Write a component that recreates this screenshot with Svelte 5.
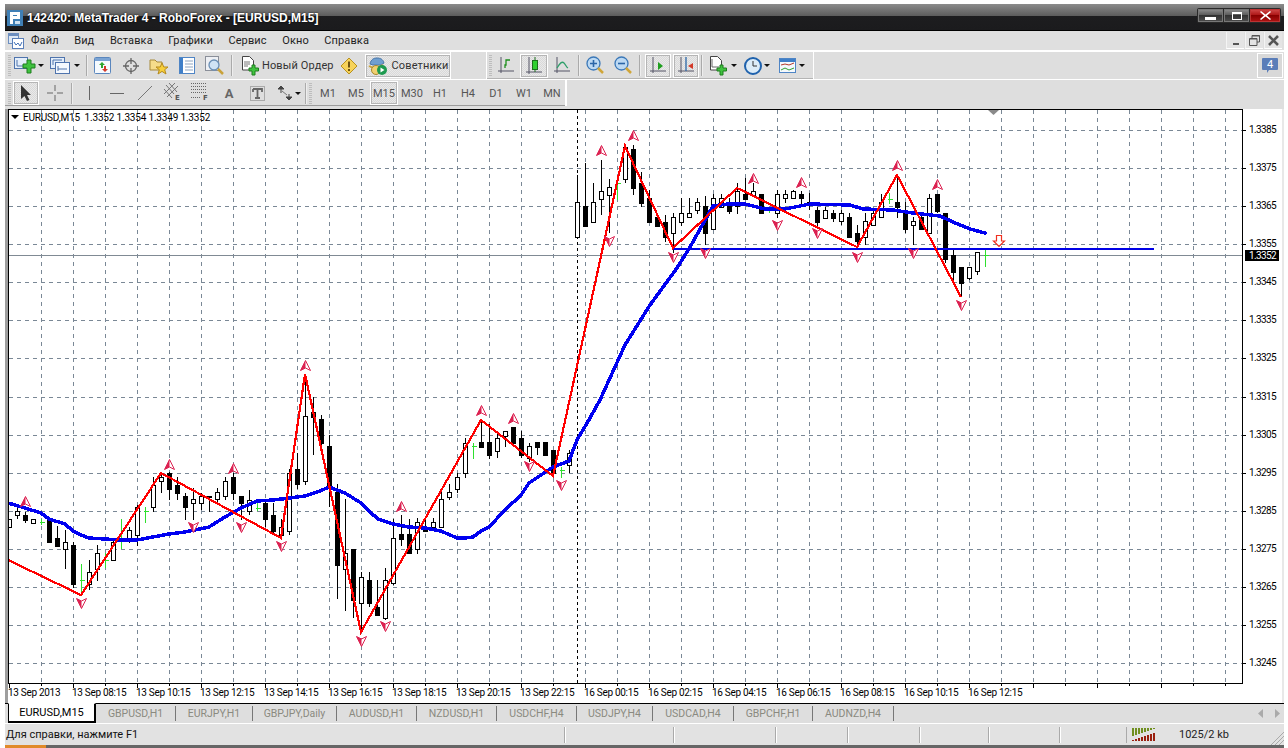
<script>
  const W = 'w', B = 'b', G = 'g';
  // [high, bodyTop, bodyBottom, low, kind] in chart pixels; one candle every 8px from x=9
  const candles = [
    [519,519,527,527,W],[508,511,515,519,W],[512,515,520,523,B],[519,519,523,523,W],[519,522,522,525,G],[519,519,542,542,B],[526,538,546,546,B],[530,542,549,569,W],[542,545,584,588,B],[564,580,580,592,G],[560,572,584,590,W],[545,553,569,581,W],[553,560,560,568,G],[538,542,560,560,W],[519,538,538,549,G],[527,530,539,543,W],[505,507,535,546,W],[507,511,511,523,G],[477,485,507,512,W],[473,477,481,493,W],
    [472,473,489,500,B],[477,485,493,500,B],[493,496,507,520,B],[488,499,503,520,W],[493,496,503,510,W],[496,496,497,512,W],[488,492,499,503,W],[477,481,496,500,W],[473,477,493,500,B],[496,496,503,520,B],[490,500,511,515,W],[500,508,508,511,G],[499,503,519,527,B],[503,515,531,535,B],[519,527,535,539,W],[469,473,531,535,W],[453,469,484,489,B],[375,416,481,485,W],[397,412,417,455,B],[415,419,443,447,B],
    [435,446,485,507,B],[484,492,565,599,B],[499,553,569,611,W],[549,549,600,618,B],[572,577,603,633,W],[572,580,603,607,B],[580,607,615,615,B],[568,580,618,620,W],[519,538,583,585,W],[515,534,539,546,B],[519,534,553,554,B],[518,522,549,554,W],[518,527,531,532,B],[518,522,527,530,W],[492,499,527,527,W],[484,492,497,500,W],[473,477,489,493,W],[438,443,473,478,W],[443,446,446,459,G],[420,442,447,447,B],
    [424,442,455,459,B],[434,438,451,458,W],[431,431,436,447,W],[427,427,443,443,B],[431,438,455,458,B],[443,446,458,462,W],[442,442,447,455,B],[442,442,455,455,B],[450,450,473,477,B],[467,470,470,478,G],[450,453,465,473,W],[175,202,237,238,W],[163,206,226,226,B],[183,202,222,222,W],[160,191,199,215,W],[179,187,195,233,W],[183,183,183,200,G],[145,147,179,183,W],[145,149,188,195,B],[172,183,203,207,B],
    [190,198,222,222,B],[213,217,226,226,B],[215,222,237,242,B],[213,217,233,253,W],[198,213,222,226,W],[198,213,217,217,W],[198,202,210,214,W],[196,206,233,245,B],[194,198,229,229,W],[194,198,207,207,W],[198,203,211,214,B],[183,191,206,214,W],[178,194,199,199,B],[183,191,195,195,W],[194,194,213,213,B],[207,208,208,213,G],[190,194,213,218,W],[190,194,198,203,W],[190,191,198,198,W],[191,194,198,205,B],
    [193,202,205,210,B],[207,210,222,227,B],[207,210,218,218,W],[210,213,218,222,B],[210,213,221,225,W],[213,217,237,237,B],[225,233,241,247,B],[213,221,237,245,W],[209,213,225,225,W],[194,202,217,217,W],[193,199,199,204,G],[177,202,207,218,B],[202,213,229,233,B],[217,221,225,245,W],[213,217,229,229,B],[194,198,233,233,W],[194,194,211,213,B],[213,213,259,263,B],[248,255,272,283,B],[267,267,283,297,B],[267,267,278,280,W],[252,252,271,275,W],[248,255,255,267,G]
  ].slice(0,123);

  const gridX = Array.from({length:38},(_,i)=>41+32*i);
  const ticksMajor = Array.from({length:19},(_,i)=>9+64*i);
  const prices = ['1.3385','1.3375','1.3365','1.3355','1.3345','1.3335','1.3325','1.3315','1.3305','1.3295','1.3285','1.3275','1.3265','1.3255','1.3245'];
  const gridY = [130,168,206,244,282,320,358,397,435,473,511,549,587,625,663];
  const times = ['13 Sep 2013','13 Sep 08:15','13 Sep 10:15','13 Sep 12:15','13 Sep 14:15','13 Sep 16:15','13 Sep 18:15','13 Sep 20:15','13 Sep 22:15','16 Sep 00:15','16 Sep 02:15','16 Sep 04:15','16 Sep 06:15','16 Sep 08:15','16 Sep 10:15','16 Sep 12:15'];
  const zigzag = '8,560 81,595 161,473 281,538 305,374 361,632 481,420 553,476 625,146 673,248 737,188 857,247 897,175 961,297';
  const ma = '8,503 25,508 41,513 49,519 65,524 73,531 81,535 89,538 105,539 121,540 137,540 153,537 169,534 185,532 209,527 225,517 241,508 257,501 273,500 290,498 305,496 320,491 329,487 345,493 361,503 370,512 378,519 393,524 409,527 425,528 441,531 457,538 465,538 473,537 481,531 489,527 505,510 521,495 529,483 553,467 569,461 577,440 590,418 600,400 625,345 650,305 677,268 690,247 713,206 728,204 745,204 765,209 785,209 805,205 810,204 850,205 863,209 893,210 913,213 940,216 953,222 970,229 985,233';
  const ups = [[25,501],[169,464],[233,468],[305,365],[401,506],[481,410],[513,418],[601,150],[633,135],[753,178],[801,182],[897,165],[937,184]];
  const downs = [[81,603],[193,527],[241,527],[281,546],[361,641],[385,626],[529,466],[561,485],[609,241],[673,257],[705,253],[777,225],[817,233],[857,257],[913,253],[961,305]];

  const tabs = [['GBPUSD,H1',80],['EURJPY,H1',77],['GBPJPY,Daily',84],['AUDUSD,H1',80],['NZDUSD,H1',80],['USDCHF,H4',80],['USDJPY,H4',76],['USDCAD,H4',81],['GBPCHF,H1',79],['AUDNZD,H4',81]];
  const menu = ['Файл','Вид','Вставка','Графики','Сервис','Окно','Справка'];
  const periods = ['M1','M5','M15','M30','H1','H4','D1','W1','MN'];
  const statusCells = [109,102,72,72,69,71,67];
  const bars = Array.from({length:8},(_,i)=>i);
</script>

<div class="window">
  <header class="title">
    <svg class="logo" width="16" height="16" viewBox="0 0 16 16"><rect width="16" height="16" fill="#3f7fb5"/><path d="M3 2h10v7H6v5H3zM6 5v1h4V5z" fill="#fff" fill-rule="evenodd"/><path d="M8 11h5v3H8z" fill="#cfe2f2"/></svg>
    <span class="title-text">142420: MetaTrader 4 - RoboForex - [EURUSD,M15]</span>
    <div class="caption">
      <span class="cap"><i class="cap-min"></i></span>
      <span class="cap"><i class="cap-max"></i></span>
      <span class="cap close">
        <svg width="11" height="9" viewBox="0 0 11 9"><path d="M1 0l4.500 3.500L10 0l1 1-4 3.500L11 8l-1 1-4.500-3.500L1 9 0 8l4-3.500L0 1z" fill="#fff"/></svg>
      </span>
    </div>
  </header>

  <nav class="menubar">
    <svg class="doc-ico" width="16" height="16" viewBox="0 0 16 16"><rect x="0.500" y="0.500" width="10" height="10" fill="#dfe9f5" stroke="#6d8fc0"/><rect x="4.500" y="5.500" width="11" height="10" fill="#fff" stroke="#5a7fb8"/><path d="M6 9l2 3 2-2 2 3 2-4" fill="none" stroke="#3f6fb5"/><path d="M1 1h9v2H1z" fill="#6d8fc0"/></svg>
    {#each menu as m}<span class="menu-item">{m}</span>{/each}
    <div class="mdi">
      <span class="mdi-b"><i class="mdi-min"></i></span>
      <span class="mdi-b">
        <svg width="11" height="11" viewBox="0 0 11 11"><path d="M3 3V.500h7.500V7H8M.500 3.500H8v7H.500z" fill="none" stroke="#555"/><path d="M3 1h8M1 4h7" stroke="#555"/></svg>
      </span>
      <span class="mdi-b">
        <svg width="11" height="11" viewBox="0 0 11 11"><path d="M1 1l9 9M10 1l-9 9" stroke="#555" stroke-width="2.600"/></svg>
      </span>
    </div>
  </nav>

  <div class="tool-row row1">
    <div class="bar bar-a">
      <i class="grip"></i>
      <span class="btn w30 first">
        <svg width="22" height="18" viewBox="0 0 22 18"><rect x=".5" y=".5" width="13" height="11" fill="#e4eefa" stroke="#4f74ad"/><path d="M3 3v6M3 9h8" stroke="#4f74ad"/><path d="M9 7h4V3h4v4h4v4h-4v5h-4v-5H9z" fill="#3fc23f" stroke="#1f7f1f"/></svg><i class="caret"></i>
      </span>
      <span class="btn w30 ml6">
        <svg width="22" height="18" viewBox="0 0 22 18"><rect x=".5" y=".5" width="14" height="11" fill="#e4eefa" stroke="#4f74ad"/><rect x="5.500" y="5.500" width="14" height="11" fill="#f4f8fd" stroke="#4f74ad"/><path d="M3 3v5M3 3h9M8 9v5M8 12h9" stroke="#4f74ad"/></svg><i class="caret"></i>
      </span>
      <i class="sep s9"></i>
      <span class="btn w28">
        <svg width="18" height="18" viewBox="0 0 18 18"><rect x=".5" y=".5" width="16" height="16" rx="1" fill="#f6fafe" stroke="#5a86bd"/><rect x="1" y="1" width="15" height="3" fill="#7aa3d3"/><path d="M5 8l3-3 3 3H9v3H7V8z" fill="#2fa52f"/><path d="M8 12l3 3 3-3h-2V9h-2v3z" fill="#d33a2a"/></svg>
      </span>
      <span class="btn w28">
        <svg width="18" height="18" viewBox="0 0 18 18"><circle cx="9" cy="9" r="5.500" fill="none" stroke="#666" stroke-width="1.300"/><path d="M9 1v6M9 11v6M1 9h6M11 9h6" stroke="#666" stroke-width="1.300"/></svg>
      </span>
      <span class="btn w28">
        <svg width="20" height="18" viewBox="0 0 20 18"><path d="M1 3h5l2 2h5v8H1z" fill="#f5dc8a" stroke="#a78a3a"/><path d="M13 6l1.800 4H19l-3.300 2.700 1.300 4.300-4-2.600-4 2.600 1.300-4.300L7 10h4.200z" fill="#f7cf3a" stroke="#b58a1e"/></svg>
      </span>
      <span class="btn w28">
        <svg width="16" height="17" viewBox="0 0 16 17"><rect x=".5" y=".5" width="15" height="16" fill="#fff" stroke="#4f85c5"/><rect x="1" y="1" width="3" height="15" fill="#3f7fc8"/><path d="M6 4h8M6 7h8M6 10h8M6 13h8" stroke="#8fa5bf"/></svg>
      </span>
      <span class="btn w28">
        <svg width="20" height="20" viewBox="0 0 20 20"><rect x=".5" y=".5" width="13" height="14" fill="#eef0f4" stroke="#8a8f99"/><circle cx="9" cy="9" r="5" fill="#cfe3f5" stroke="#6a8fb5" stroke-width="1.300"/><path d="M13 13l5 5" stroke="#c9a23a" stroke-width="2.500"/></svg>
      </span>
      <i class="sep s3"></i>
      <span class="btn order">
        <svg width="18" height="20" viewBox="0 0 18 20"><path d="M1.500.5h7l4 4V14h-11z" fill="#fff" stroke="#444"/><path d="M3 6h6M3 8h6M3 10h4" stroke="#777"/><path d="M8 12h3V9h3v3h3.500v3H14v4h-3v-4H8z" fill="#3fc23f" stroke="#1f7f1f"/></svg>
        <span class="lbl">Новый Ордер</span>
      </span>
      <span class="btn w28">
        <svg width="18" height="18" viewBox="0 0 18 18"><path d="M9 1l8 8-8 8-8-8z" fill="#f7d35a" stroke="#b8911f"/><path d="M9 4.500v6" stroke="#6f5410" stroke-width="2"/><path d="M9 12v2" stroke="#6f5410" stroke-width="2"/></svg>
      </span>
      <span class="btn pressed advisors">
        <svg width="20" height="20" viewBox="0 0 20 20"><path d="M2 8c1-5 4-6 7-6s6 1 7 5l-3 2H5z" fill="#6f9fd0" stroke="#4a76a8"/><path d="M1 10c3 2 9 2 14-1" fill="none" stroke="#c9a23a" stroke-width="2"/><circle cx="8" cy="14" r="4.500" fill="#f0d070" stroke="#a8882a"/><circle cx="14" cy="14" r="5" fill="#1e9a50"/><path d="M12.500 11.500l4 2.500-4 2.500z" fill="#fff"/></svg>
        <span class="lbl">Советники</span>
      </span>
    </div>
    <div class="bar bar-b">
      <i class="grip"></i>
      <span class="btn w28">
        <svg width="16" height="17" viewBox="0 0 16 17"><path d="M3 0v16M0 14h16" stroke="#556"/><path d="M7 11V8h1V3h4" fill="none" stroke="#1c8f1c" stroke-width="1.300"/></svg>
      </span>
      <span class="btn w28 pressed">
        <svg width="16" height="19" viewBox="0 0 16 19"><path d="M3 1v17M0 16h16" stroke="#556"/><path d="M9 1v15" stroke="#1c6f1c"/><rect x="6.500" y="4.500" width="5" height="9" fill="#2fd02f" stroke="#1c6f1c"/></svg>
      </span>
      <span class="btn w28">
        <svg width="16" height="17" viewBox="0 0 16 17"><path d="M3 0v16M0 14h16" stroke="#556"/><path d="M3 11c3-5 5-7 7-5s2 4 4 5" fill="none" stroke="#2f9f6a" stroke-width="1.300"/></svg>
      </span>
      <i class="sep s2"></i>
      <span class="btn w28">
        <svg width="18" height="19" viewBox="0 0 18 19"><circle cx="7.500" cy="7.500" r="6.500" fill="#bcd9f3" stroke="#3b78b8" stroke-width="1.300"/><path d="M4 7.500h7M7.500 4v7" stroke="#2a66a8" stroke-width="1.600"/><path d="M12 12l5 5" stroke="#d0a63a" stroke-width="2.500"/></svg>
      </span>
      <span class="btn w28">
        <svg width="18" height="19" viewBox="0 0 18 19"><circle cx="7.500" cy="7.500" r="6.500" fill="#bcd9f3" stroke="#3b78b8" stroke-width="1.300"/><path d="M4 7.500h7" stroke="#2a66a8" stroke-width="1.600"/><path d="M12 12l5 5" stroke="#d0a63a" stroke-width="2.500"/></svg>
      </span>
      <i class="sep s3"></i>
      <span class="btn w26 pressed ml2">
        <svg width="16" height="17" viewBox="0 0 16 17"><path d="M3 0v16M0 14h16" stroke="#556"/><path d="M8 5l5 4-5 4z" fill="#1f9f1f"/></svg>
      </span>
      <span class="btn w26 pressed ml2">
        <svg width="16" height="17" viewBox="0 0 16 17"><path d="M3 0v16M0 14h16" stroke="#556"/><path d="M8 0v14" stroke="#2a66a8" stroke-width="1.300"/><path d="M15 6l-5 3 5 3z" fill="#d33a2a"/></svg>
      </span>
      <i class="sep s3"></i>
      <span class="btn w30 ml3">
        <svg width="20" height="20" viewBox="0 0 20 20"><path d="M1.500.5h7l4 4V14h-11z" fill="#fff" stroke="#444"/><path d="M3 3v8h7" fill="none" stroke="#666"/><path d="M8 12h3V9h3v3h3.500v3H14v4h-3v-4H8z" fill="#3fc23f" stroke="#1f7f1f"/></svg><i class="caret"></i>
      </span>
      <span class="btn w30 ml4">
        <svg width="18" height="18" viewBox="0 0 18 18"><circle cx="9" cy="9" r="8" fill="#dcecf8" stroke="#1f62ad" stroke-width="2"/><path d="M9 4v5h4" fill="none" stroke="#333"/></svg><i class="caret"></i>
      </span>
      <span class="btn w30 ml5">
        <svg width="18" height="16" viewBox="0 0 18 16"><rect x=".5" y=".5" width="16" height="14" fill="#f5f9fd" stroke="#4f85c5"/><rect x="1" y="1" width="15" height="3" fill="#3f7fc8"/><path d="M2 7l4-1 4 1 5-2" fill="none" stroke="#b23a2a"/><path d="M2 12l4-2 4 2 5-2" fill="none" stroke="#2f9f2f"/></svg><i class="caret"></i>
      </span>
    </div>
    <span class="notify">
      <svg width="16" height="16" viewBox="0 0 16 16"><path d="M1 0h14a1 1 0 0 1 1 1v10a1 1 0 0 1-1 1H7l-2 3v-3H1a1 1 0 0 1-1-1V1a1 1 0 0 1 1-1z" fill="#5a7db8"/><text x="8" y="10" class="n4">4</text></svg>
    </span>
  </div>

  <div class="tool-row row2">
    <div class="bar bar-c">
      <i class="grip"></i>
      <span class="btn pressed w26 ml2">
        <svg width="12" height="18" viewBox="0 0 12 18"><path d="M1 1v14l3.500-3 2.500 5 2.500-1-2.500-5H11z" fill="#333"/></svg>
      </span>
      <span class="btn w28 ml2">
        <svg width="16" height="16" viewBox="0 0 16 16"><path d="M8 0v6M8 10v6M0 8h6M10 8h6" stroke="#666"/></svg>
      </span>
      <i class="sep s2"></i>
      <span class="btn w28 ml1"><svg width="3" height="14" viewBox="0 0 3 14"><path d="M1.500 0v14" stroke="#666"/></svg></span>
      <span class="btn w28"><svg width="14" height="3" viewBox="0 0 14 3"><path d="M0 1.500h14" stroke="#666"/></svg></span>
      <span class="btn w28"><svg width="14" height="14" viewBox="0 0 14 14"><path d="M0 14L14 0" stroke="#777"/></svg></span>
      <span class="btn w28">
        <svg width="20" height="22" viewBox="0 0 20 22"><path d="M1 12L12 1M4 15L15 4M3 3l8 9M6 1l8 9M1 7l8 9" stroke="#777"/><text x="12" y="18" class="tiny">E</text></svg>
      </span>
      <span class="btn w28">
        <svg width="20" height="22" viewBox="0 0 20 22"><path d="M0 1.500h15M0 4.500h15M0 7.500h15M0 10.500h15M0 15.500h10" stroke="#666" stroke-dasharray="1 1"/><text x="12" y="18" class="tiny">F</text></svg>
      </span>
      <span class="btn w28 glyph">A</span>
      <span class="btn w28">
        <svg width="15" height="15" viewBox="0 0 15 15"><rect x=".5" y=".5" width="14" height="14" fill="none" stroke="#777" stroke-dasharray="1 1"/><path d="M3 3h9v3M7.500 3v9M5 12h5M3 3v3" fill="none" stroke="#666" stroke-width="1.800"/></svg>
      </span>
      <span class="btn w28 wide-arrow">
        <svg width="16" height="14" viewBox="0 0 16 14"><path d="M4 0l3 3H1zM4 3v4" fill="#444" stroke="#444"/><path d="M5 5l5 4" stroke="#777"/><path d="M12 14l3-3H9zM12 11V8" fill="#444" stroke="#444"/></svg><i class="caret"></i>
      </span>
      <i class="sep s3 ml3"></i>
      <i class="grip"></i>
      <div class="periods">
        {#each periods as p}
          <span class="period" class:pressed={p === 'M15'}>{p}</span>
        {/each}
      </div>
    </div>
  </div>

  <main class="chart-wrap">
    <svg class="chart" width="1274" height="594" viewBox="8 109 1274 594">
      <g class="grid">
        {#each gridX as x}<line x1={x + .5} x2={x + .5} y1="110" y2="683"/>{/each}
        {#each gridY as y}<line y1={y + .5} y2={y + .5} x1="9" x2="1242"/>{/each}
      </g>
      <line class="vsep" x1="577.5" x2="577.5" y1="110" y2="683"/>
      <line class="bid" x1="9" x2="1242" y1="255.5" y2="255.5"/>

      {#each candles as c, i}
        {@const x = 9 + 8 * i + .5}
        {#if c[4] === 'g'}
          <line class="doji" x1={x} x2={x} y1={c[0]} y2={c[3]}/>
          <line class="doji" x1={x - 2} x2={x + 3} y1={c[1] + .5} y2={c[1] + .5}/>
        {:else}
          <line class="wick" x1={x} x2={x} y1={c[0]} y2={c[3]}/>
          <rect class={c[4] === 'w' ? 'bull' : 'bear'} x={x - 2} y={c[1] + .5} width="4" height={c[2] - c[1]}/>
        {/if}
      {/each}

      <line class="level" x1="673" x2="1154" y1="249" y2="249"/>
      <polyline class="ma" points={ma}/>
      <polyline class="zig" points={zigzag}/>

      {#each ups as [x, y]}
        <g transform="translate({x + .5} {y + .5})"><path class="frac" d="M0-5L5 5 0 2.500-5 5z"/><path class="frac-in" d="M0-5L-5 5 0 2.500z"/></g>
      {/each}
      {#each downs as [x, y]}
        <g transform="translate({x + .5} {y + .5}) scale(1 -1)"><path class="frac" d="M0-5L5 5 0 2.500-5 5z"/><path class="frac-in" d="M0-5L-5 5 0 2.500z"/></g>
      {/each}
      <path class="hollow" d="M996.500 235.500h5v5.500h3l-5.500 5.500-5.500-5.500h3z"/>

      <rect class="frame" x="8.500" y="109.500" width="1234" height="574"/>
      <path class="shift" d="M988 110h11l-5.500 5z"/>
      <path class="arrow-legend" d="M11 115h8l-4 4z"/>
      <text class="ct lg" x="23" y="121">EURUSD,M15  1.3352 1.3354 1.3349 1.3352</text>

      {#each gridY as y, i}
        <line class="tick" x1="1243" x2="1246" y1={y + .5} y2={y + .5}/>
        <text class="ct pr" x="1249" y={y + 3}>{prices[i]}</text>
      {/each}
      <rect x="1245" y="250" width="34" height="11" fill="#000"/>
      <text class="ct pr cur" x="1249" y="259">1.3352</text>

      {#each ticksMajor as x}<line class="tick" x1={x + .5} x2={x + .5} y1="684" y2="688"/>{/each}
      {#each gridX as x}<line class="tick" x1={x + .5} x2={x + .5} y1="684" y2="686"/>{/each}
      {#each times as t, i}
        <text class="ct tm" x={8 + 64 * i} y="696">{t}</text>
      {/each}
    </svg>
  </main>

  <div class="tabs">
    <span class="tab active">EURUSD,M15</span>
    {#each tabs as [name, w]}
      <span class="tab" style="width:{w}px">{name}</span>
    {/each}
    <span class="tab-nav">
      <svg width="5" height="9" viewBox="0 0 5 9"><path d="M5 0v9L0 4.500z" fill="#aaa"/></svg>
      <svg width="5" height="9" viewBox="0 0 5 9"><path d="M0 0v9l5-4.500z" fill="#aaa"/></svg>
    </span>
  </div>

  <footer class="status">
    <span class="help">Для справки, нажмите F1</span>
    {#each statusCells as w}<span class="cell" style="width:{w}px"></span>{/each}
    <span class="net">
      <svg width="25" height="13" viewBox="0 0 25 13">
        {#each bars as b}
          <rect x={b * 3} y="0" width="2" height={8 - b} fill="#6f8f1f"/>
          <rect x={b * 3} y={12 - b} width="2" height={b + 1} fill="#9a1f0f"/>
        {/each}
      </svg>
    </span>
    <span class="kb">1025/2 kb</span>
    <svg class="resize" width="14" height="14" viewBox="0 0 14 14"><path d="M14 1L1 14M14 5L5 14M14 9l-5 5" stroke="#aaa"/></svg>
  </footer>
  <div class="task"><i></i></div>
</div>

<style>
  :global(body) { margin: 0; background: #fff; overflow: hidden; }
  i { display: block; }
  .window {
    width: 1279px; height: 744px; margin: 4px 4px 0 5px;
    background: #dedede; display: flex; flex-direction: column;
    font: 11px Roboto, sans-serif; color: #333; overflow: hidden;
  }
  .title {
    height: 27px; flex: none; display: flex; align-items: center; padding-left: 2px; position: relative;
    background: linear-gradient(#8b8b8b 0, #5c5c5c 12px, #1d1d1f 12px, #1b1b1d 26px, #000 26px);
  }
  .logo { margin-right: 4px; }
  .title-text { color: #fff; font: bold 12px "Liberation Sans", sans-serif; white-space: nowrap; text-shadow: 0 0 2px #000; }
  .caption {
    margin-left: auto; margin-right: 3px; margin-top: -4px; display: flex; gap: 1px; padding: 1px;
    background: #2a2a2a; border-radius: 2px;
  }
  .cap {
    width: 25px; height: 13px; display: flex; align-items: center; justify-content: center;
    background: linear-gradient(#888, #555 50%, #333 50%, #4a4a4a); border: 1px solid #777; box-sizing: border-box;
  }
  .close { width: 30px; background: linear-gradient(#c44, #a11 50%, #800 50%, #a11); border-color: #b33; }
  .cap-min { width: 11px; height: 3px; background: #fff; margin-top: 6px; }
  .cap-max { width: 10px; height: 8px; box-sizing: border-box; border: 1px solid #fff; border-top-width: 2px; }

  .menubar {
    height: 19px; flex: none; display: flex; align-items: center; padding-left: 3px;
    border-bottom: 2px solid #fff; background: #dfdfdf;
  }
  .doc-ico { margin-right: 7px; }
  .menu-item { margin-right: 15.500px; white-space: nowrap; font-size: 11px; color: #222; letter-spacing: .12px; }
  .mdi { margin-left: auto; margin-right: 2px; display: flex; gap: 1px; }
  .mdi-b {
    width: 17px; height: 16px; display: flex; align-items: center; justify-content: center;
    background: #e4e4e4; border-bottom: 1px solid #fff; border-left: 1px solid #f4f4f4;
  }
  .mdi-min { width: 6px; height: 2px; background: #555; margin-top: 7px; }

  .tool-row { flex: none; display: flex; align-items: stretch; }
  .row1 { height: 27px; border-bottom: 1px solid #fff; }
  .row2 { height: 26px; }
  .bar { display: flex; align-items: center; height: 100%; border-right: 1px solid #fff; box-sizing: border-box; }
  .bar-a { width: 446px; padding-left: 3px; }
  .bar-b { width: 328px; margin-left: 35px; padding-left: 2px; border-left: 1px solid #fff; box-shadow: inset 0 -1px #b4b4b4; }
  .bar-c { width: 562px; padding-left: 3px; border-right: 2px solid #fff; box-shadow: inset 0 -1px #9c9c9c; }
  .grip {
    width: 3px; height: 21px; flex: none;
    background: repeating-linear-gradient(#bdbdbd 0 1px, transparent 1px 2px);
  }
  .btn { height: 24px; flex: none; display: flex; align-items: center; justify-content: center; gap: 2px; box-sizing: border-box; }
  .w26 { width: 26px; } .w28 { width: 28px; } .w30 { width: 30px; }
  .first { margin-left: 3px; }
  .ml1 { margin-left: 1px; } .ml2 { margin-left: 2px; } .ml3 { margin-left: 3px; } .ml4 { margin-left: 4px; } .ml5 { margin-left: 5px; } .ml6 { margin-left: 6px; }
  .caret { width: 0; height: 0; border: 3px solid transparent; border-top: 3px solid #111; border-bottom: 0; }
  .sep { width: 1px; height: 21px; flex: none; background: #aaa; box-shadow: 1px 0 #eee; }
  .s2 { margin: 0 2px; } .s3 { margin: 0 3px 0 2px; } .s9 { margin: 0 2px 0 6px; }
  .order { width: 97px; margin-left: 3px; gap: 3px; justify-content: flex-start; padding-left: 3px; }
  .lbl { font-size: 11px; color: #333; white-space: nowrap; letter-spacing: .12px; }
  .pressed {
    border: 1px solid #fff; outline: 1px solid #b5b5b5; outline-offset: -2px;
    background: repeating-conic-gradient(#e9e9e9 0 25%, #d9d9d9 0 50%) 0 0 / 2px 2px;
  }
  .advisors { width: 86px; margin-left: 2px; gap: 4px; }
  .notify {
    margin-left: auto; margin-right: 1px; margin-top: 1px; width: 26px; height: 25px; box-sizing: border-box;
    display: flex; align-items: center; justify-content: center;
    border: 1px solid #fff; background: #d8d8d8;
  }
  .n4 { fill: #fff; font: 11px Roboto, sans-serif; text-anchor: middle; }
  .tiny { font: bold 7px "DejaVu Sans", sans-serif; fill: #555; }
  .glyph { font-weight: bold; font-size: 13px; color: #666; }
  .wide-arrow { width: 28px; margin-left: 4px; }
  .periods { display: flex; margin-left: 2px; }
  .period { width: 28px; height: 24px; flex: none; display: flex; align-items: center; justify-content: center; box-sizing: border-box; font-size: 11px; color: #555; }

  .chart-wrap { flex: none; height: 594px; width: 1274px; margin-top: 3px; background: #fff; border-left: 3px solid #9e9e9e; border-right: 2px solid #e8e8e8; }
  .chart { display: block; }
  .grid line { stroke: #7a8896; stroke-dasharray: 4 4; shape-rendering: crispEdges; }
  .vsep { stroke: #000; stroke-dasharray: 3 3; shape-rendering: crispEdges; }
  .bid { stroke: #808a94; shape-rendering: crispEdges; }
  .wick { stroke: #000; shape-rendering: crispEdges; }
  .doji { stroke: #2ee02e; shape-rendering: crispEdges; }
  .bull { fill: #fff; stroke: #000; shape-rendering: crispEdges; }
  .bear { fill: #000; stroke: #000; shape-rendering: crispEdges; }
  .level { stroke: #0000e6; stroke-width: 2; shape-rendering: crispEdges; }
  .ma { fill: none; stroke: #0000f0; stroke-width: 3.500; stroke-linejoin: round; stroke-linecap: round; shape-rendering: crispEdges; }
  .zig { fill: none; stroke: #f00; stroke-width: 2.200; shape-rendering: crispEdges; }
  .frac { fill: #fff; stroke: #dc2050; stroke-width: 1; }
  .frac-in { fill: #dc2050; }
  .hollow { fill: #fff; stroke: #f03020; stroke-width: 1.200; }
  .frame { fill: none; stroke: #000; shape-rendering: crispEdges; }
  .shift { fill: #8a8a8a; }
  .arrow-legend { fill: #000; }
  .ct { font: 10px Roboto, sans-serif; fill: #000; white-space: pre; }
  .lg { letter-spacing: -.18px; }
  .pr { letter-spacing: -.6px; }
  .tm { letter-spacing: -.3px; }
  .cur { fill: #fff; }
  .tick { stroke: #000; shape-rendering: crispEdges; }

  .tabs {
    height: 21px; flex: none; display: flex; align-items: stretch; background: #dedede;
    border-top: 1px solid #000; border-bottom: 1px solid #fff; box-sizing: border-box; padding-left: 3px;
  }
  .tab {
    flex: none; display: flex; align-items: center; justify-content: center; box-sizing: border-box;
    font-size: 10.500px; color: #8a8a80; border-right: 1px solid #777; margin: 2px 0; white-space: nowrap;
  }
  .active {
    width: 88px; margin: -1px 0 0; background: #fff; color: #000; font-size: 11px;
    border: 1px solid #000; border-top-color: #fff; border-right-width: 2px; border-bottom-width: 2px; height: 20px;
  }
  .tab-nav { margin-left: auto; margin-right: 4px; display: flex; align-items: center; gap: 12px; }

  .status { height: 21px; flex: none; display: flex; align-items: center; position: relative; background: #e2e2e2; }
  .help { width: 559px; flex: none; padding-left: 1px; box-sizing: border-box; color: #111; font-size: 11px; white-space: nowrap; }
  .cell { flex: none; height: 16px; box-sizing: border-box; border-left: 1px solid #aaa; box-shadow: inset 1px 0 #fff; }
  .net { width: 53px; padding-left: 5px; flex: none; height: 16px; display: flex; align-items: center; box-sizing: border-box; border-left: 1px solid #aaa; }
  .kb { font-size: 11px; color: #222; white-space: nowrap; }
  .resize { position: absolute; right: 0; bottom: 0; }
  .task { height: 3px; flex: none; background: #666; }
  .task i { width: 41px; height: 3px; background: #e08a2a; }
</style>
